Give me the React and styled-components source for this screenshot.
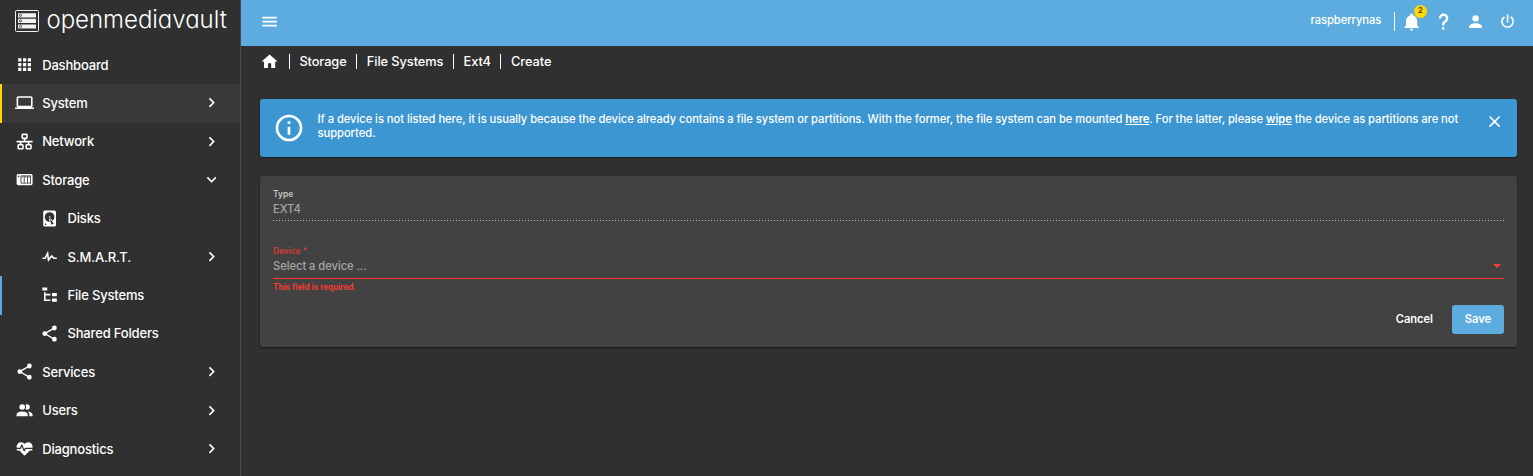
import React from 'react';
import styled, { createGlobalStyle } from 'styled-components';

const GlobalStyle = createGlobalStyle`
  *, *::before, *::after { box-sizing: border-box; }
  html, body { margin: 0; height: 100%; overflow: hidden; background: #303030; }
  body {
    font-family: Inter, Roboto, "Liberation Sans", sans-serif;
    color: #fff;
  }
`;

const icons = {
  apps: 'M16,20H20V16H16M16,14H20V10H16M10,8H14V4H10M16,8H20V4H16M10,14H14V10H10M4,14H8V10H4M4,20H8V16H4M10,20H14V16H10M4,8H8V4H4V8Z',
  laptop: 'M4,6H20V16H4M20,18A2,2 0 0,0 22,16V6C22,4.89 21.1,4 20,4H4C2.89,4 2,4.89 2,6V16A2,2 0 0,0 4,18H0V20H24V18H20Z',
  lan: 'M10,2C8.89,2 8,2.89 8,4V7C8,8.11 8.89,9 10,9H11V11H2V13H6V15H5C3.89,15 3,15.89 3,17V20C3,21.11 3.89,22 5,22H9C10.11,22 11,21.11 11,20V17C11,15.89 10.11,15 9,15H8V13H16V15H15C13.89,15 13,15.89 13,17V20C13,21.11 13.89,22 15,22H19C20.11,22 21,21.11 21,20V17C21,15.89 20.11,15 19,15H18V13H22V11H13V9H14C15.11,9 16,8.11 16,7V4C16,2.89 15.11,2 14,2H10M10,4H14V7H10V4M5,17H9V20H5V17M15,17H19V20H15V17Z',
  nas: 'M4,5C2.89,5 2,5.89 2,7V17C2,18.11 2.89,19 4,19H20C21.11,19 22,18.11 22,17V7C22,5.89 21.11,5 20,5H4M4.5,7A1,1 0 0,1 5.5,8A1,1 0 0,1 4.5,9A1,1 0 0,1 3.5,8A1,1 0 0,1 4.5,7M7,7H20V17H7V7M8,8V16H11V8H8M12,8V16H15V8H12M16,8V16H19V8H16M9,9H10V10H9V9M13,9H14V10H13V9M17,9H18V10H17V9Z',
  harddisk: 'M6,2H18A2,2 0 0,1 20,4V20A2,2 0 0,1 18,22H6A2,2 0 0,1 4,20V4A2,2 0 0,1 6,2M12,4A6,6 0 0,0 6,10C6,13.31 8.69,16 12.1,16L11.22,13.77C10.95,13.29 11.11,12.68 11.59,12.4L12.45,11.9C12.93,11.63 13.54,11.79 13.82,12.27L15.74,14.69C17.12,13.59 18,11.9 18,10A6,6 0 0,0 12,4M12,9A1,1 0 0,1 13,10A1,1 0 0,1 12,11A1,1 0 0,1 11,10A1,1 0 0,1 12,9M7,18A1,1 0 0,0 6,19A1,1 0 0,0 7,20A1,1 0 0,0 8,19A1,1 0 0,0 7,18M12.09,13.27L14.58,19.58L17.17,18.08L12.95,12.77L12.09,13.27Z',
  pulse: 'M3,13H5.79L10.1,4.79L11.28,13.75L14.5,9.66L17.83,13H21V15H17L14.67,12.67L9.92,18.73L8.94,11.31L7,15H3V13Z',
  tree: 'M3,3H9V7H3V3M15,10H21V14H15V10M15,17H21V21H15V17M13,13H7V18H13V20H7L5,20V9H7V11H13V13Z',
  share: 'M18,16.08C17.24,16.08 16.56,16.38 16.04,16.85L8.91,12.7C8.96,12.47 9,12.24 9,12C9,11.76 8.96,11.53 8.91,11.3L15.96,7.19C16.5,7.69 17.21,8 18,8A3,3 0 0,0 21,5A3,3 0 0,0 18,2A3,3 0 0,0 15,5C15,5.24 15.04,5.47 15.09,5.7L8.04,9.81C7.5,9.31 6.79,9 6,9A3,3 0 0,0 3,12A3,3 0 0,0 6,15C6.79,15 7.5,14.69 8.04,14.19L15.16,18.34C15.11,18.55 15.08,18.77 15.08,19C15.08,20.61 16.39,21.91 18,21.91C19.61,21.91 20.92,20.61 20.92,19A2.92,2.92 0 0,0 18,16.08Z',
  users: 'M16 17V19H2V17S2 13 9 13 16 17 16 17M12.5 7.5A3.5 3.5 0 1 0 9 11A3.5 3.5 0 0 0 12.5 7.5M15.94 13A5.32 5.32 0 0 1 18 17V19H22V17S22 13.37 15.94 13M15 4A3.39 3.39 0 0 0 13.07 4.59A5 5 0 0 1 13.07 10.41A3.39 3.39 0 0 0 15 11A3.5 3.5 0 0 0 15 4Z',
  heart: 'M7.5,4A5.5,5.5 0 0,0 2,9.5C2,10 2.09,10.5 2.22,11H6.3L7.57,7.63C7.87,6.83 9.05,6.75 9.43,7.63L11.5,13L12.09,11.58C12.22,11.25 12.57,11 13,11H21.78C21.91,10.5 22,10 22,9.5A5.5,5.5 0 0,0 16.5,4C14.64,4 13,4.93 12,6.34C11,4.93 9.36,4 7.5,4V4M3,12.5A1,1 0 0,0 2,13.5A1,1 0 0,0 3,14.5H5.44L11,20C12,20.9 12,20.9 13,20L18.56,14.5H21A1,1 0 0,0 22,13.5A1,1 0 0,0 21,12.5H13.4L12.47,14.8C12.07,15.81 10.92,15.67 10.55,14.83L8.5,9.5L7.54,11.83C7.39,12.21 7.05,12.5 6.6,12.5H3Z',
  bell: 'M21,19V20H3V19L5,17V11C5,7.9 7.03,5.17 10,4.29C10,4.19 10,4.1 10,4A2,2 0 0,1 12,2A2,2 0 0,1 14,4C14,4.1 14,4.19 14,4.29C16.97,5.17 19,7.9 19,11V17L21,19M14,21A2,2 0 0,1 12,23A2,2 0 0,1 10,21',
  help: 'M10,19H13V22H10V19M12,2C17.35,2.22 19.68,7.62 16.5,11.67C15.67,12.67 14.33,13.33 13.67,14.17C13,15 13,16 13,17H10C10,15.33 10,13.92 10.67,12.92C11.33,11.92 12.67,11.33 13.5,10.67C15.92,8.43 15.32,5.26 12,5A3,3 0 0,0 9,8H6A6,6 0 0,1 12,2Z',
  account: 'M12,4A4,4 0 0,1 16,8A4,4 0 0,1 12,12A4,4 0 0,1 8,8A4,4 0 0,1 12,4M12,14C16.42,14 20,15.79 20,18V20H4V18C4,15.79 7.58,14 12,14Z',
  power: 'M16.56,5.44L15.11,6.89C16.84,7.94 18,9.83 18,12A6,6 0 0,1 12,18A6,6 0 0,1 6,12C6,9.83 7.16,7.94 8.88,6.88L7.44,5.44C5.36,6.88 4,9.28 4,12A8,8 0 0,0 12,20A8,8 0 0,0 20,12C20,9.28 18.64,6.88 16.56,5.44M13,3H11V13H13',
  home: 'M10,20V14H14V20H19V12H22L12,3L2,12H5V20H10Z',
  menu: 'M3,6H21V8H3V6M3,11H21V13H3V11M3,16H21V18H3V16Z',
  info: 'M11,9H13V7H11M12,20C7.59,20 4,16.41 4,12C4,7.59 7.59,4 12,4C16.41,4 20,7.59 20,12C20,16.41 16.41,20 12,20M12,2A10,10 0 0,0 2,12A10,10 0 0,0 12,22A10,10 0 0,0 22,12A10,10 0 0,0 12,2M11,17H13V11H11V17Z',
  close: 'M19,6.41L17.59,5L12,10.59L6.41,5L5,6.41L10.59,12L5,17.59L6.41,19L12,13.41L17.59,19L19,17.59L13.41,12L19,6.41Z',
  right: 'M8.59,16.58L13.17,12L8.59,7.41L10,6L16,12L10,18L8.59,16.58Z',
  down: 'M7.41,8.58L12,13.17L16.59,8.58L18,10L12,16L6,10L7.41,8.58Z',
};

const Svg = styled.svg`
  display: block;
  flex: none;
  width: ${(p) => p.$size}px;
  height: ${(p) => p.$size}px;
  fill: currentColor;
`;

const Icon = ({ name, size = 19.2 }) => (
  <Svg $size={size} viewBox="0 0 24 24" aria-hidden="true">
    <path d={icons[name]} />
  </Svg>
);

const Shell = styled.div`
  display: flex;
  height: 476px;
  background: #303030;
`;

const Sidebar = styled.aside`
  flex: none;
  width: 241px;
  border-right: 1px solid #494949;
  overflow: hidden;
`;

const Brand = styled.div`
  display: flex;
  height: 46px;
  padding: 10px 0 0 15px;
`;

const BrandMark = styled.svg`
  flex: none;
  width: 24px;
  height: 22px;
`;

const BrandName = styled.span`
  margin: -5px 0 0 7.5px;
  font-size: 24px;
  line-height: 30px;
  font-weight: 300;
  letter-spacing: -0.03px;
  font-feature-settings: "cv11";
  white-space: nowrap;
`;

const Nav = styled.nav`
  display: flex;
  flex-direction: column;
`;

const accents = { system: '#ffd700', active: '#5dacdf' };

const NavItem = styled.a`
  display: flex;
  align-items: center;
  flex: none;
  gap: 8px;
  height: 38.4px;
  padding: 0 19px 1.2px ${(p) => (p.$nested ? 38.3 : 13)}px;
  border-left: 2px solid ${(p) => accents[p.$accent] || 'transparent'};
  background: ${(p) => (p.$accent === 'system' ? '#393939' : 'transparent')};
  font-size: 13px;
  line-height: 20px;
  font-weight: 500;
  letter-spacing: -0.17px;
`;

const NavLabel = styled.span`
  flex: 1;
`;

const Main = styled.div`
  flex: 1;
  min-width: 0;
  display: flex;
  flex-direction: column;
`;

const TopBar = styled.header`
  display: flex;
  align-items: center;
  justify-content: space-between;
  height: 46px;
  padding: 0 16px 3px 19px;
  background: #5dacdf;
`;

const TopActions = styled.div`
  display: flex;
  align-items: center;
  gap: 12.8px;
`;

const Host = styled.span`
  font-size: 11.2px;
  line-height: 16px;
  font-weight: 500;
  letter-spacing: -0.07px;
  margin-top: -4px;
`;

const Divider = styled.span`
  width: 1px;
  height: ${(p) => p.$height}px;
  background: #fff;
`;

const Bell = styled.span`
  position: relative;
  margin-left: -6px;
`;

const Badge = styled.span`
  position: absolute;
  left: 12px;
  top: -6.6px;
  width: 13px;
  height: 12.4px;
  border-radius: 50%;
  background: #ffd700;
  color: #303030;
  font-size: 7.5px;
  font-weight: 600;
  line-height: 12px;
  text-align: center;
`;

const Crumbs = styled.nav`
  display: flex;
  align-items: center;
  gap: 9.6px;
  height: 31px;
  padding-left: 19px;
  font-size: 12.8px;
  line-height: 18px;
  font-weight: 500;
  letter-spacing: -0.08px;
`;

const Content = styled.main`
  display: flex;
  flex-direction: column;
  gap: 19px;
  padding: 22px 16px 0 19px;
`;

const Alert = styled.section`
  display: flex;
  height: 58px;
  padding: 13px 13px 0;
  border-radius: 3px;
  background: #3c96d1;
  box-shadow: 0 1px 2px rgba(0, 0, 0, 0.4);
`;

const AlertText = styled.p`
  flex: 1;
  margin: 0 0 0 12.5px;
  font-size: 11.2px;
  line-height: 14px;
  font-weight: 500;
  letter-spacing: -0.045px;
`;

const Link = styled.a`
  font-weight: 600;
  text-decoration: underline;
`;

const Card = styled.section`
  display: flex;
  flex-direction: column;
  height: 171px;
  padding: 12px 13px 13px;
  border-radius: 3px;
  background: #424242;
  box-shadow: 0 1px 2px rgba(0, 0, 0, 0.5);
`;

const Field = styled.div`
  display: flex;
  flex-direction: column;
  height: 57px;
`;

const FieldLabel = styled.label`
  padding-top: 1px;
  font-size: 8.4px;
  line-height: 10px;
  font-weight: ${(p) => (p.$invalid ? 500 : 600)};
  color: ${(p) => (p.$invalid ? '#e53a32' : '#c6c6c6')};
`;

const FieldValue = styled.div`
  display: flex;
  align-items: center;
  justify-content: space-between;
  height: 20px;
  padding-right: 3px;
  font-size: 11.2px;
  font-weight: 500;
  letter-spacing: -0.05px;
  color: #a6a6a6;
`;

const DottedLine = styled.div`
  height: 1px;
  margin-top: 1px;
  background: repeating-linear-gradient(90deg, #b8b8b8 0 1px, transparent 1px 3px);
`;

const SolidLine = styled.div`
  height: 1px;
  margin-top: 2px;
  background: #ff3b30;
`;

const Caret = styled.span`
  border: 4px solid transparent;
  border-top-color: #ff3b30;
  border-bottom: 0;
`;

const FieldError = styled.div`
  margin-top: 2px;
  font-size: 8.4px;
  line-height: 12px;
  font-weight: 600;
  letter-spacing: -0.09px;
  color: #ff3b30;
`;

const Actions = styled.div`
  display: flex;
  justify-content: flex-end;
  gap: 6px;
  margin-top: auto;
`;

const Button = styled.button`
  height: 29px;
  padding: 0 13px;
  border: 0;
  border-radius: 3px;
  background: ${(p) => (p.$primary ? '#5dacdf' : 'transparent')};
  color: #fff;
  font: 600 11.2px/29px Inter, Roboto, sans-serif;
  letter-spacing: -0.08px;
  min-width: ${(p) => (p.$primary ? 52 : 0)}px;
`;

const navItems = [
  { label: 'Dashboard', icon: 'apps' },
  { label: 'System', icon: 'laptop', chevron: 'right', accent: 'system' },
  { label: 'Network', icon: 'lan', chevron: 'right' },
  { label: 'Storage', icon: 'nas', chevron: 'down' },
  { label: 'Disks', icon: 'harddisk', nested: true },
  { label: 'S.M.A.R.T.', icon: 'pulse', chevron: 'right', nested: true },
  { label: 'File Systems', icon: 'tree', nested: true, accent: 'active' },
  { label: 'Shared Folders', icon: 'share', nested: true },
  { label: 'Services', icon: 'share', chevron: 'right' },
  { label: 'Users', icon: 'users', chevron: 'right' },
  { label: 'Diagnostics', icon: 'heart', chevron: 'right' },
];

const crumbs = ['Storage', 'File Systems', 'Ext4', 'Create'];

const Logo = () => (
  <BrandMark viewBox="0 0 24 22" aria-hidden="true">
    <rect x="0.5" y="0.5" width="23" height="21" rx="1" fill="none" stroke="#f2f2f2" />
    {[3.2, 8.8, 14.4].map((y) => (
      <g key={y}>
        <rect x="3" y={y} width="18" height="4.2" rx="0.5" fill="#f2f2f2" />
        <circle cx="5.5" cy={y + 2.1} r="1.1" fill="#f2f2f2" stroke="#303030" strokeWidth="0.8" />
      </g>
    ))}
  </BrandMark>
);

export default function App() {
  return (
    <>
      <GlobalStyle />
      <Shell>
        <Sidebar>
          <Brand>
            <Logo />
            <BrandName>openmediavault</BrandName>
          </Brand>
          <Nav>
            {navItems.map((item) => (
              <NavItem key={item.label} $nested={item.nested} $accent={item.accent}>
                <Icon name={item.icon} />
                <NavLabel>{item.label}</NavLabel>
                {item.chevron && <Icon name={item.chevron} />}
              </NavItem>
            ))}
          </Nav>
        </Sidebar>
        <Main>
          <TopBar>
            <Icon name="menu" />
            <TopActions>
              <Host>raspberrynas</Host>
              <Divider $height={19} />
              <Bell>
                <Icon name="bell" />
                <Badge>2</Badge>
              </Bell>
              <Icon name="help" />
              <Icon name="account" />
              <Icon name="power" />
            </TopActions>
          </TopBar>
          <Crumbs>
            <Icon name="home" />
            {crumbs.map((crumb) => (
              <React.Fragment key={crumb}>
                <Divider $height={15} />
                <span>{crumb}</span>
              </React.Fragment>
            ))}
          </Crumbs>
          <Content>
            <Alert>
              <Icon name="info" size={32} />
              <AlertText>
                If a device is not listed here, it is usually because the device already contains a file system or
                partitions. With the former, the file system can be mounted <Link>here</Link>. For the latter, please{' '}
                <Link>wipe</Link> the device as partitions are not supported.
              </AlertText>
              <Icon name="close" />
            </Alert>
            <Card>
              <Field>
                <FieldLabel>Type</FieldLabel>
                <FieldValue>EXT4</FieldValue>
                <DottedLine />
              </Field>
              <Field>
                <FieldLabel $invalid>Device *</FieldLabel>
                <FieldValue>
                  Select a device ...
                  <Caret />
                </FieldValue>
                <SolidLine />
                <FieldError>This field is required.</FieldError>
              </Field>
              <Actions>
                <Button>Cancel</Button>
                <Button $primary>Save</Button>
              </Actions>
            </Card>
          </Content>
        </Main>
      </Shell>
    </>
  );
}
